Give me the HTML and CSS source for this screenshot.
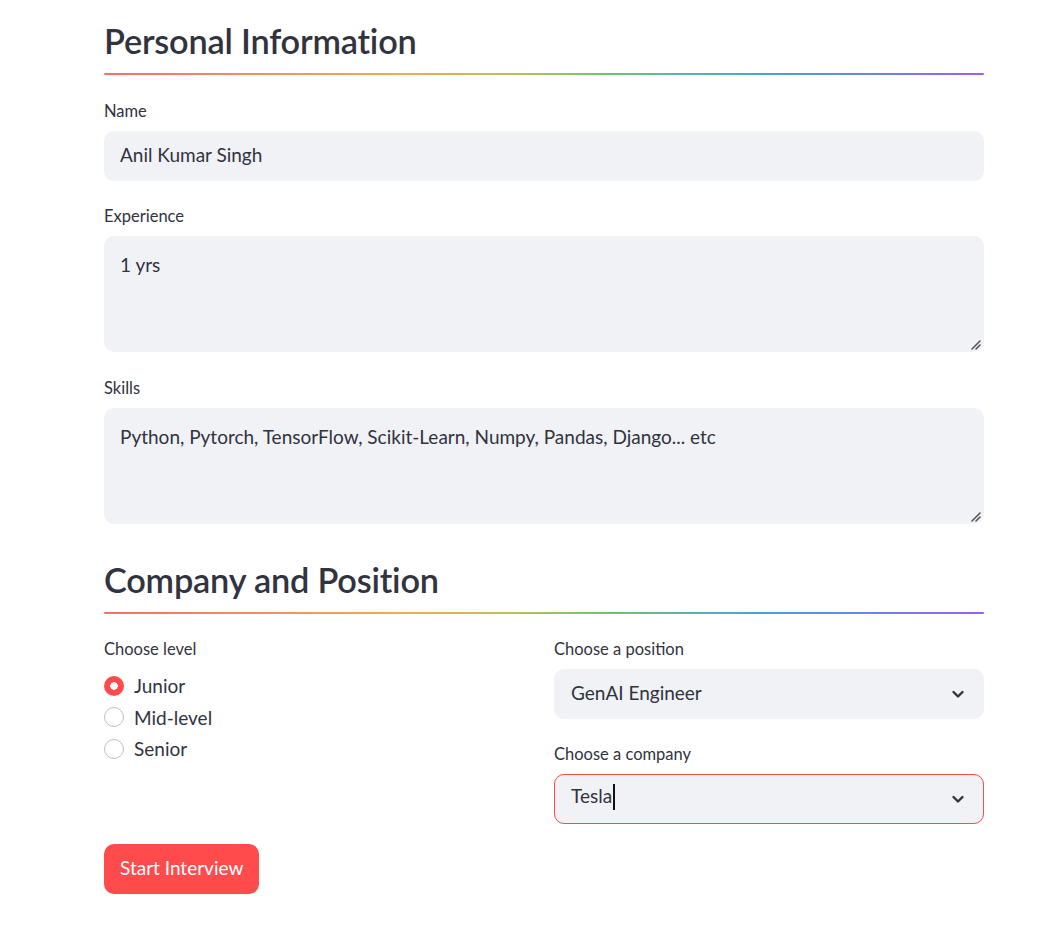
FILE: index.html
```html
<!DOCTYPE html>
<html>
<head>
<meta charset="utf-8">
<link rel="stylesheet" href="styles.css">
</head>
<body>
<main class="page">
  <section class="section">
    <h2 class="heading">Personal Information</h2>
    <div class="divider"></div>
  </section>

  <div class="field">
    <div class="label">Name</div>
    <div class="input">Anil Kumar Singh</div>
  </div>

  <div class="field">
    <div class="label">Experience</div>
    <div class="textarea">1 yrs
      <svg class="grip" width="12" height="12" viewBox="0 0 12 12"><path d="M11 3 L3 11 M11 7 L7 11" stroke="#555" stroke-width="1.6" stroke-linecap="round"/></svg>
    </div>
  </div>

  <div class="field field-skills">
    <div class="label">Skills</div>
    <div class="textarea">Python, Pytorch, TensorFlow, Scikit-Learn, Numpy, Pandas, Django... etc
      <svg class="grip" width="12" height="12" viewBox="0 0 12 12"><path d="M11 3 L3 11 M11 7 L7 11" stroke="#555" stroke-width="1.6" stroke-linecap="round"/></svg>
    </div>
  </div>

  <section class="section section-2">
    <h2 class="heading">Company and Position</h2>
    <div class="divider"></div>
  </section>

  <div class="columns">
    <div class="col">
      <div class="label">Choose level</div>
      <div class="radios">
        <div class="radio"><span class="dot dot-on"></span>Junior</div>
        <div class="radio"><span class="dot"></span>Mid-level</div>
        <div class="radio"><span class="dot"></span>Senior</div>
      </div>
    </div>
    <div class="col">
      <div class="field-inner">
        <div class="label">Choose a position</div>
        <div class="select"><span>GenAI Engineer</span>
          <svg class="chev" width="14" height="14" viewBox="0 0 14 14"><path d="M2.5 5 L7 9.5 L11.5 5" fill="none" stroke="#31333f" stroke-width="2.4" stroke-linecap="round" stroke-linejoin="round"/></svg>
        </div>
      </div>
      <div class="field-inner gap-top">
        <div class="label">Choose a company</div>
        <div class="select select-focus"><span>Tesla<span class="caret"></span></span>
          <svg class="chev" width="14" height="14" viewBox="0 0 14 14"><path d="M2.5 5 L7 9.5 L11.5 5" fill="none" stroke="#31333f" stroke-width="2.4" stroke-linecap="round" stroke-linejoin="round"/></svg>
        </div>
      </div>
    </div>
  </div>

  <div class="actions">
    <button class="btn">Start Interview</button>
  </div>
</main>
</body>
</html>
```

FILE: styles.css
```css
* { box-sizing: border-box; }
html, body { margin: 0; padding: 0; background: #fff; }
body {
  font-family: "Lato", "Source Sans Pro", sans-serif;
  color: #31333f;
}
.page {
  width: 880px;
  margin-left: 104px;
  padding-top: 19px;
  padding-bottom: 40px;
  display: flex;
  flex-direction: column;
}
.heading {
  margin: 0;
  font-size: 34.3px;
  line-height: 43px;
  font-weight: 600;
  color: #31333f;
  letter-spacing: -0.2px;
}
.divider {
  margin-top: 11px;
  height: 2px;
  border-radius: 2px;
  background: linear-gradient(to right, #f56e6e 0%, #f7a94a 33%, #b8c24f 47%, #6cc66a 57%, #40a4e6 75%, #9a5ef8 100%);
}
.section-2 { margin-top: 34px; }
.field { margin-top: 25px; display: flex; flex-direction: column; }
.section + .field { margin-top: 26px; }
.field-skills { margin-top: 26px; }
.label {
  font-size: 16.5px;
  line-height: 20px;
  height: 20px;
  margin-bottom: 10px;
}
.input, .textarea, .select {
  background: #f0f2f6;
  border-radius: 10px;
  font-size: 19px;
  padding: 0 16px;
}
.input { height: 50px; line-height: 48px; }
.textarea {
  position: relative;
  height: 116px;
  padding-top: 13px;
  line-height: 32px;
}
.grip { position: absolute; right: 3px; bottom: 2px; }
.columns {
  margin-top: 25px;
  display: grid;
  grid-template-columns: 430px 430px;
  column-gap: 20px;
}
.col { display: flex; flex-direction: column; }
.radios { margin-top: 1px; display: flex; flex-direction: column; }
.radio {
  height: 31.5px;
  display: flex;
  align-items: center;
  gap: 10px;
  font-size: 19px;
}
.dot {
  width: 20px;
  height: 20px;
  border-radius: 50%;
  border: 1px solid #bfc0c6;
  background: #fff;
  flex: none;
}
.dot-on {
  border: none;
  background: radial-gradient(circle, #fff 0 3.5px, #ff4b4b 4px);
}
.select {
  height: 50px;
  display: flex;
  align-items: center;
  justify-content: space-between;
  border: 1px solid #f0f2f6;
  padding-bottom: 3px;
}
.select-focus { border-color: #ff4b4b; }
.chev { margin-right: 2px; margin-top: 2px; }
.caret {
  display: inline-block;
  width: 2px;
  height: 26px;
  background: #111;
  vertical-align: middle;
  margin-left: 1px;
  position: relative;
  top: -1px;
}
.gap-top { margin-top: 25px; }
.actions { margin-top: 20px; }
.btn {
  height: 50px;
  padding: 0 16px 3px;
  border: none;
  border-radius: 10px;
  background: #ff4b4b;
  color: #fff;
  font-family: inherit;
  font-size: 19px;
}
```
